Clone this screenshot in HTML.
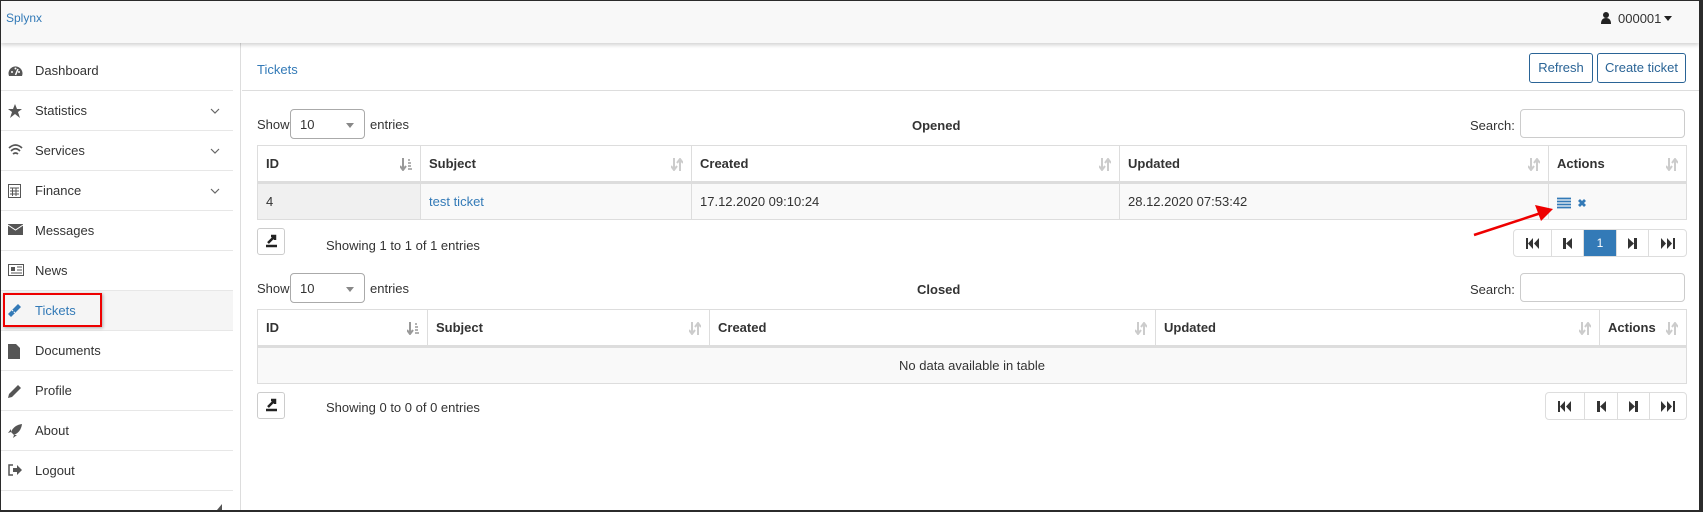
<!DOCTYPE html>
<html><head><meta charset="utf-8"><style>
*{box-sizing:border-box;margin:0;padding:0}
body{width:1703px;height:512px;overflow:hidden;background:#2b2b2b;font-family:"Liberation Sans",Arial,sans-serif;font-size:13px;color:#333;position:relative}
.page{position:absolute;left:1px;top:1px;width:1698px;height:509px;background:#fff;overflow:hidden}
.a{position:absolute}
.hdr{left:0;top:0;width:1698px;height:42px;background:#f8f8f8;box-shadow:0 2px 4px rgba(0,0,0,.18);z-index:2}
.side{left:0;top:42px;width:240px;height:470px;border-right:1px solid #ddd}
.item{position:absolute;left:0;width:232px;height:40px;border-bottom:1px solid #e7e7e7;font-size:13px;line-height:40px}
.item span{position:absolute;left:34px}
.item svg{position:absolute;left:7px;top:13px}
.chev{position:absolute;left:210px;top:16px}
.btn{position:absolute;border:1px solid #2a6496;border-radius:3px;color:#2a6496;text-align:center;line-height:28px;background:#fff}
.sel{position:absolute;border:1px solid #aaa;border-radius:4px;width:75px;height:30px;line-height:30px;padding-left:9px}
.sel:after{content:"";position:absolute;right:10px;top:13px;border:4px solid transparent;border-top:5px solid #888}
.inp{position:absolute;border:1px solid #ccc;border-radius:4px;width:165px;height:29px}
table{position:absolute;border-collapse:collapse;table-layout:fixed}
td,th{border:1px solid #ddd;padding:0 8px;text-align:left;position:relative}
th{font-weight:bold;height:37px;border-bottom:3px solid #ddd}
td{height:37px;background:#f9f9f9}
.so{position:absolute;right:8px;top:12px}
.pag{position:absolute;display:flex;border:1px solid #ddd;border-radius:4px;height:28px}
.pag div{border-left:1px solid #ddd;display:flex;align-items:center;justify-content:center}
.pag div:first-child{border-left:none}
.exp{position:absolute;width:28px;height:27px;border:1px solid #ccc;border-radius:3px}
</style></head><body><div class="page">
<div class="a hdr"><div class="a" style="left:5px;top:10px;color:#337ab7;font-size:12px">Splynx</div>
<svg class="a" style="left:1600px;top:11px" width="10" height="12" viewBox="0 0 10 12"><circle cx="5" cy="3" r="3" fill="#222"/><path d="M0 12 Q0 6 5 6 Q10 6 10 12Z" fill="#222"/></svg>
<div class="a" style="left:1617px;top:10px;font-size:13px">000001</div>
<div class="a" style="left:1663px;top:15px;border:4px solid transparent;border-top:5px solid #222"></div></div>

<div class="a side">
<div class="item" style="top:8px"><svg width="15" height="14"><path d="M1 12 A7 7 0 1 1 14 12Z" fill="#555"/><path d="M7.5 11 10 5" stroke="#fff" stroke-width="1.5"/><circle cx="4" cy="8" r="1" fill="#fff"/><circle cx="7.5" cy="4.5" r="1" fill="#fff"/><circle cx="11" cy="8" r="1" fill="#fff"/></svg><span>Dashboard</span></div>
<div class="item" style="top:48px"><svg width="14" height="14"><path d="M7 0 9 5 14 5 10 8 12 14 7 10 2 14 4 8 0 5 5 5Z" fill="#555"/></svg><span>Statistics</span><svg class="chev" width="10" height="7" style="left:209px;top:17px"><path d="M1 1 5 5 9 1" stroke="#666" fill="none" stroke-width="1.2"/></svg></div>
<div class="item" style="top:88px"><svg width="15" height="12"><path d="M1 4 Q7.5 -2 14 4 M3 7 Q7.5 2.5 12 7 M5 10 Q7.5 8 10 10" stroke="#555" stroke-width="1.7" fill="none"/></svg><span>Services</span><svg class="chev" width="10" height="7" style="left:209px;top:17px"><path d="M1 1 5 5 9 1" stroke="#666" fill="none" stroke-width="1.2"/></svg></div>
<div class="item" style="top:128px"><svg width="13" height="14"><rect x=".5" y=".5" width="12" height="13" fill="none" stroke="#555"/><path d="M2 4h9M2 7h9M2 10h9M4.5 4v8M8 4v8" stroke="#555"/></svg><span>Finance</span><svg class="chev" width="10" height="7" style="left:209px;top:17px"><path d="M1 1 5 5 9 1" stroke="#666" fill="none" stroke-width="1.2"/></svg></div>
<div class="item" style="top:168px"><svg width="15" height="12"><rect width="15" height="11" fill="#555"/><path d="M0 1 7.5 6 15 1" stroke="#fff" fill="none"/></svg><span>Messages</span></div>
<div class="item" style="top:208px"><svg width="16" height="12"><rect x=".5" y=".5" width="15" height="11" fill="none" stroke="#555"/><rect x="3" y="3" width="4" height="4" fill="#555"/><path d="M9 3h5M9 6h5M3 9h11" stroke="#555"/></svg><span>News</span></div>
<div class="item" style="top:248px;background:#f5f5f5"><svg width="14" height="14"><path d="M3 13 0 10 10 0 13 3Z" fill="#337ab7"/><path d="M4 6l4 4" stroke="#fff" stroke-dasharray="1.5 1"/></svg><span style="color:#337ab7">Tickets</span></div>
<div class="item" style="top:288px"><svg width="12" height="15"><path d="M0 0h8l4 4v11H0Z" fill="#555"/></svg><span>Documents</span></div>
<div class="item" style="top:328px"><svg width="14" height="14"><path d="M0 14 1 10 10 1 13 4 4 13Z" fill="#555"/></svg><span>Profile</span></div>
<div class="item" style="top:368px"><svg width="14" height="14"><path d="M14 0Q6 1 3 8L6 11Q13 8 14 0ZM3 8 0 9 3 5ZM6 11 5 14 9 11Z" fill="#555"/></svg><span>About</span></div>
<div class="item" style="top:408px"><svg width="14" height="12"><path d="M5 1H1v10h4" stroke="#555" stroke-width="1.5" fill="none"/><path d="M5 4h4V1l5 5-5 5V8H5Z" fill="#555"/></svg><span>Logout</span></div>
</div>
<div class="a" style="left:216px;top:503px;border-left:5px solid transparent;border-bottom:6px solid #555"></div>
<div class="a" style="left:2px;top:292px;width:99px;height:34px;border:2px solid #e00;box-shadow:1px 1px 3px rgba(0,0,0,.3)"></div>

<div class="a" style="left:241px;top:89px;width:1460px;border-top:1px solid #ddd"></div>
<div class="a" style="left:256px;top:61px;color:#337ab7;font-size:13px">Tickets</div>
<div class="btn" style="left:1528px;top:52px;width:64px;height:30px">Refresh</div>
<div class="btn" style="left:1596px;top:52px;width:89px;height:30px">Create ticket</div>

<div class="a" style="left:256px;top:116px">Show</div>
<div class="sel" style="left:289px;top:108px">10</div>
<div class="a" style="left:369px;top:116px">entries</div>
<div class="a" style="left:911px;top:117px;font-weight:bold">Opened</div>
<div class="a" style="left:1469px;top:117px">Search:</div>
<div class="inp" style="left:1519px;top:108px"></div>
<table style="left:256px;top:144px;width:1429px">
<colgroup><col style="width:163px"><col style="width:271px"><col style="width:428px"><col style="width:429px"><col style="width:138px"></colgroup>
<tr><th>ID<svg class="so" width="12" height="13"><path d="M3 0v11M0 8l3 4 3-4" stroke="#999" stroke-width="2" fill="none"/><path d="M8 2h2M8 5h3M8 8h3M8 11h4" stroke="#999" stroke-width="1.6"/></svg></th><th>Subject<svg class="so" width="12" height="13"><path d="M3 0v11M0 8l3 4 3-4M9 13V2M6 5l3-4 3 4" stroke="#ccc" stroke-width="2" fill="none"/></svg></th><th>Created<svg class="so" width="12" height="13"><path d="M3 0v11M0 8l3 4 3-4M9 13V2M6 5l3-4 3 4" stroke="#ccc" stroke-width="2" fill="none"/></svg></th><th>Updated<svg class="so" width="12" height="13"><path d="M3 0v11M0 8l3 4 3-4M9 13V2M6 5l3-4 3 4" stroke="#ccc" stroke-width="2" fill="none"/></svg></th><th>Actions<svg class="so" width="12" height="13"><path d="M3 0v11M0 8l3 4 3-4M9 13V2M6 5l3-4 3 4" stroke="#ccc" stroke-width="2" fill="none"/></svg></th></tr>
<tr><td style="background:#f0f0f0">4</td><td style="color:#337ab7">test ticket</td><td>17.12.2020 09:10:24</td><td>28.12.2020 07:53:42</td><td><svg style="vertical-align:middle" width="30" height="12"><path d="M0 1.5h14M0 4.5h14M0 7.5h14M0 10.5h14" stroke="#337ab7" stroke-width="1.8"/><path d="M22 3l6 6M28 3l-6 6" stroke="#337ab7" stroke-width="2.8"/></svg></td></tr>
</table>
<svg class="a" style="left:1470px;top:200px" width="90" height="40"><path d="M3 34 70 12" stroke="#e00" stroke-width="2.5"/><path d="M82 8 64 4 70 20Z" fill="#e00"/></svg>
<div class="exp" style="left:256px;top:227px"><svg width="26" height="25"><path d="M8 17h11" stroke="#222" stroke-width="2.5"/><path d="M10 14 17 7M13 7h4v4" stroke="#222" stroke-width="2.5" fill="none"/></svg></div>
<div class="a" style="left:325px;top:237px">Showing 1 to 1 of 1 entries</div>
<div class="pag" style="left:1512px;top:228px;width:174px">
<div style="width:37px"><svg width="14" height="11"><path d="M0 0h2v11H0ZM7 0v11L2 5.5ZM13 0v11L8 5.5Z" fill="#333"/></svg></div><div style="width:32px"><svg width="9" height="11"><path d="M0 0h3v11H0ZM9 0v11L3 5.5Z" fill="#333"/></svg></div><div style="width:33px;background:#337ab7;color:#fff;font-size:12px">1</div><div style="width:32px"><svg width="9" height="11"><path d="M6 0h3v11H6ZM0 0v11L6 5.5Z" fill="#333"/></svg></div><div style="width:38px"><svg width="14" height="11"><path d="M12 0h2v11h-2ZM0 0v11L5 5.5ZM6 0v11L11 5.5Z" fill="#333"/></svg></div></div>

<div class="a" style="left:256px;top:280px">Show</div>
<div class="sel" style="left:289px;top:272px">10</div>
<div class="a" style="left:369px;top:280px">entries</div>
<div class="a" style="left:916px;top:281px;font-weight:bold">Closed</div>
<div class="a" style="left:1469px;top:281px">Search:</div>
<div class="inp" style="left:1519px;top:272px"></div>
<table style="left:256px;top:308px;width:1429px">
<colgroup><col style="width:170px"><col style="width:282px"><col style="width:446px"><col style="width:444px"><col style="width:87px"></colgroup>
<tr><th>ID<svg class="so" width="12" height="13"><path d="M3 0v11M0 8l3 4 3-4" stroke="#999" stroke-width="2" fill="none"/><path d="M8 2h2M8 5h3M8 8h3M8 11h4" stroke="#999" stroke-width="1.6"/></svg></th><th>Subject<svg class="so" width="12" height="13"><path d="M3 0v11M0 8l3 4 3-4M9 13V2M6 5l3-4 3 4" stroke="#ccc" stroke-width="2" fill="none"/></svg></th><th>Created<svg class="so" width="12" height="13"><path d="M3 0v11M0 8l3 4 3-4M9 13V2M6 5l3-4 3 4" stroke="#ccc" stroke-width="2" fill="none"/></svg></th><th>Updated<svg class="so" width="12" height="13"><path d="M3 0v11M0 8l3 4 3-4M9 13V2M6 5l3-4 3 4" stroke="#ccc" stroke-width="2" fill="none"/></svg></th><th>Actions<svg class="so" width="12" height="13"><path d="M3 0v11M0 8l3 4 3-4M9 13V2M6 5l3-4 3 4" stroke="#ccc" stroke-width="2" fill="none"/></svg></th></tr>
<tr><td colspan="5" style="text-align:center">No data available in table</td></tr>
</table>
<div class="exp" style="left:256px;top:391px"><svg width="26" height="25"><path d="M8 17h11" stroke="#222" stroke-width="2.5"/><path d="M10 14 17 7M13 7h4v4" stroke="#222" stroke-width="2.5" fill="none"/></svg></div>
<div class="a" style="left:325px;top:399px">Showing 0 to 0 of 0 entries</div>
<div class="pag" style="left:1544px;top:391px;width:142px">
<div style="width:38px"><svg width="14" height="11"><path d="M0 0h2v11H0ZM7 0v11L2 5.5ZM13 0v11L8 5.5Z" fill="#333"/></svg></div><div style="width:33px"><svg width="9" height="11"><path d="M0 0h3v11H0ZM9 0v11L3 5.5Z" fill="#333"/></svg></div><div style="width:32px"><svg width="9" height="11"><path d="M6 0h3v11H6ZM0 0v11L6 5.5Z" fill="#333"/></svg></div><div style="width:37px"><svg width="14" height="11"><path d="M12 0h2v11h-2ZM0 0v11L5 5.5ZM6 0v11L11 5.5Z" fill="#333"/></svg></div></div>
</div></body></html>
